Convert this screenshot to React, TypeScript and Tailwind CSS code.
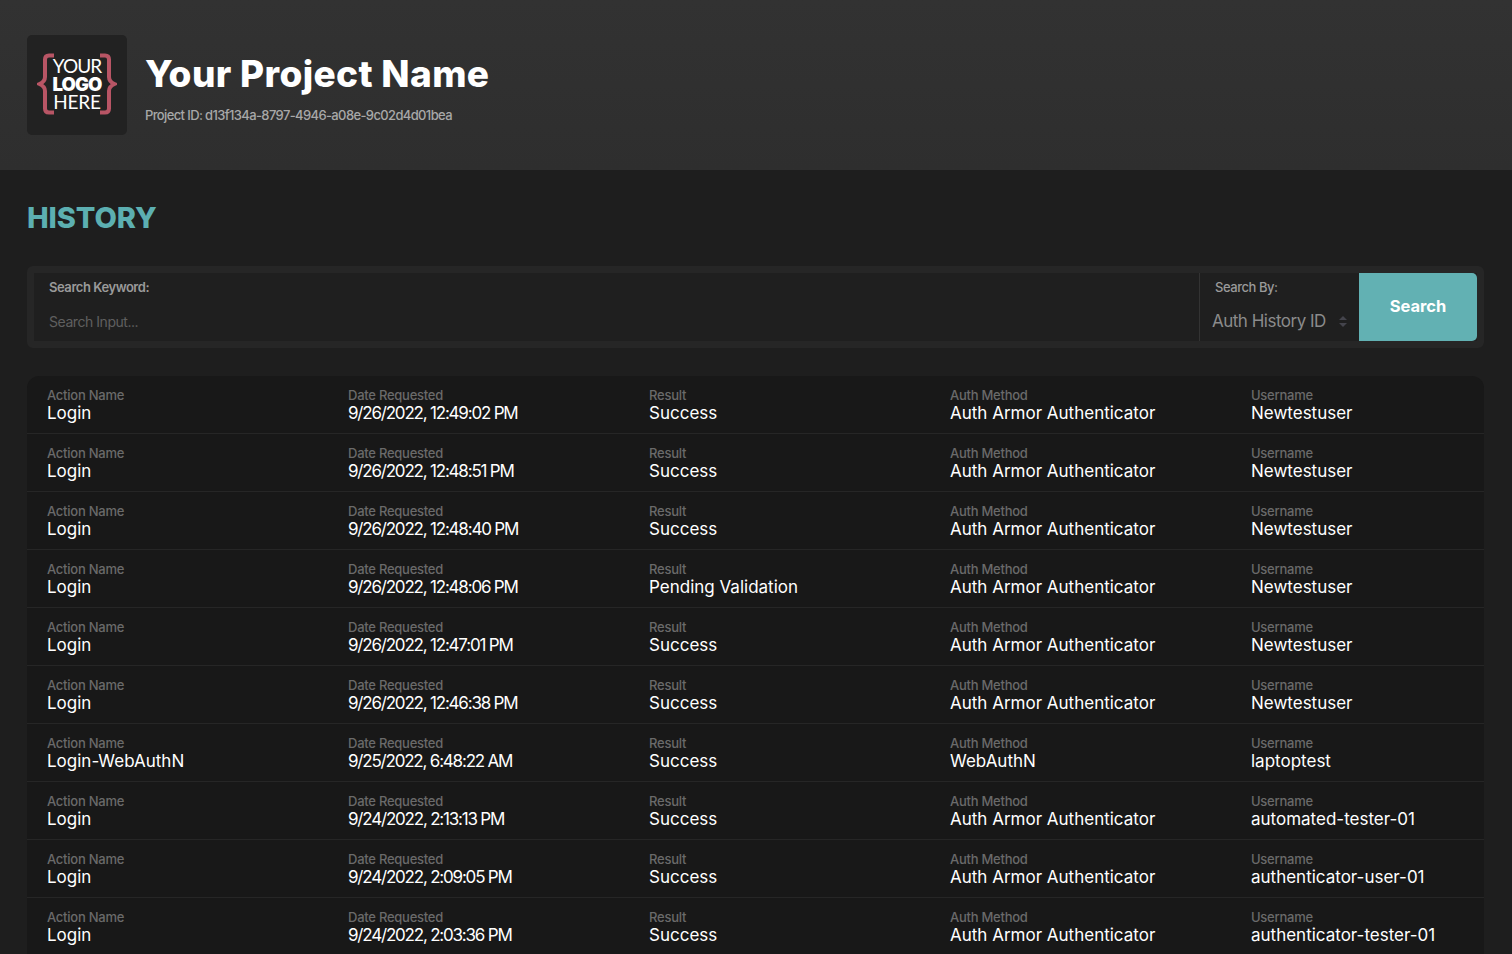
import React from 'react';

interface HistoryRow {
  action: string;
  date: string;
  result: string;
  method: string;
  username: string;
}

const armor = 'Auth Armor Authenticator';

const rows: HistoryRow[] = [
  { action: 'Login', date: '9/26/2022, 12:49:02 PM', result: 'Success', method: armor, username: 'Newtestuser' },
  { action: 'Login', date: '9/26/2022, 12:48:51 PM', result: 'Success', method: armor, username: 'Newtestuser' },
  { action: 'Login', date: '9/26/2022, 12:48:40 PM', result: 'Success', method: armor, username: 'Newtestuser' },
  { action: 'Login', date: '9/26/2022, 12:48:06 PM', result: 'Pending Validation', method: armor, username: 'Newtestuser' },
  { action: 'Login', date: '9/26/2022, 12:47:01 PM', result: 'Success', method: armor, username: 'Newtestuser' },
  { action: 'Login', date: '9/26/2022, 12:46:38 PM', result: 'Success', method: armor, username: 'Newtestuser' },
  { action: 'Login-WebAuthN', date: '9/25/2022, 6:48:22 AM', result: 'Success', method: 'WebAuthN', username: 'laptoptest' },
  { action: 'Login', date: '9/24/2022, 2:13:13 PM', result: 'Success', method: armor, username: 'automated-tester-01' },
  { action: 'Login', date: '9/24/2022, 2:09:05 PM', result: 'Success', method: armor, username: 'authenticator-user-01' },
  { action: 'Login', date: '9/24/2022, 2:03:36 PM', result: 'Success', method: armor, username: 'authenticator-tester-01' },
];

const Cell: React.FC<{ label: string; value: string; tight?: boolean }> = ({ label, value, tight }) => (
  <div>
    <div className="text-[13px] font-medium leading-[15px] tracking-[-0.25px] text-[#6a6a6a]">{label}</div>
    <div className={tight ? 'text-[17px] leading-[21px] tracking-[-1.2px] text-white' : 'text-[17px] leading-[21px] text-white'}>
      {value}
    </div>
  </div>
);

const Logo: React.FC = () => (
  <div className="relative flex h-[100px] w-[100px] shrink-0 flex-col items-center justify-center rounded-[5px] bg-[#222222] pb-[2px] text-white">
    {/* Curly braces */}
    <svg className="absolute left-[10px] top-[18px]" width="80" height="62" viewBox="0 0 80 62" fill="none">
      <path d="M17 2.5H12C9.5 2.5 8 4 8 6.5V24C8 27 6 29.5 2.5 31C6 32.5 8 35 8 38V55.5C8 58 9.5 59.5 12 59.5H17" stroke="#b85565" strokeWidth="4" />
      <path d="M63 2.5H68C70.5 2.5 72 4 72 6.5V24C72 27 74 29.5 77.5 31C74 32.5 72 35 72 38V55.5C72 58 70.5 59.5 68 59.5H63" stroke="#b85565" strokeWidth="4" />
    </svg>
    <div className="font-['Lato',sans-serif] text-[19px] leading-[18px] tracking-[-0.9px]">YOUR</div>
    <div className="font-['Inter',sans-serif] text-[18.5px] font-black leading-[18px] tracking-[-0.9px]">LOGO</div>
    <div className="font-['Lato',sans-serif] text-[19px] leading-[18px] tracking-[-0.2px]">HERE</div>
  </div>
);

export default function App() {
  return (
    <div className="h-screen overflow-hidden bg-[#1e1e1e] font-['Inter',sans-serif]">
      {/* Header */}
      <header className="flex h-[170px] items-center gap-[18px] bg-[linear-gradient(#323232,#2e2e2e)] pl-[27px]">
        <Logo />
        <div className="pt-[4px]">
          <h1 className="text-[37px] font-extrabold leading-[44px] tracking-[0.35px] text-white">Your Project Name</h1>
          <p className="mt-[11px] text-[13px] font-medium leading-[16px] tracking-[-0.63px] text-[#a8a8a8]">
            Project ID: d13f134a-8797-4946-a08e-9c02d4d01bea
          </p>
        </div>
      </header>

      <main className="pl-[27px] pr-[28px]">
        <h2 className="mt-[29px] text-[29px] font-extrabold leading-[38px] tracking-[-0.1px] text-[#5cafb1]">HISTORY</h2>

        {/* Search */}
        <div className="mt-[29px] flex h-[82px] rounded-[6px] border-[7px] border-[#262626] bg-[#1f1f1f]">
          <div className="flex flex-1 flex-col pl-[15px] pt-[6px]">
            <label className="text-[13px] font-semibold leading-[16px] tracking-[-0.45px] text-[#9a9a9a]">Search Keyword:</label>
            <input
              className="mt-[18px] bg-transparent text-[14px] leading-[18px] tracking-[-0.45px] text-white outline-none placeholder:text-[#5f5f5f]"
              placeholder="Search Input..."
            />
          </div>
          <div className="flex w-[160px] flex-col border-l border-[#333333] pl-[15px] pt-[6px]">
            <label className="text-[13px] font-medium leading-[16px] tracking-[-0.45px] text-[#9a9a9a]">Search By:</label>
            <div className="ml-[-3px] mt-[16px] flex items-center">
              <span className="text-[17px] leading-[20px] tracking-[-0.5px] text-[#8b8b8b]">Auth History ID</span>
              <svg className="ml-[13px]" width="8" height="11" viewBox="0 0 8 11" fill="#44444c">
                <path d="M4 0L8 4H0Z" />
                <path d="M4 11L0 7H8Z" />
              </svg>
            </div>
          </div>
          <button className="w-[118px] rounded-r-[5px] bg-[#62b1b3] pb-[2px] text-[16.5px] font-bold text-white">Search</button>
        </div>

        {/* History rows */}
        <div className="mt-[28px] rounded-t-[12px] bg-[#181818]">
          {rows.map((row, i) => (
            <div
              key={i}
              className="grid h-[58px] grid-cols-[301px_301px_301px_301px_1fr] items-center border-b border-[#262626] pl-[20px] pt-[2px]"
            >
              <Cell label="Action Name" value={row.action} />
              <Cell label="Date Requested" value={row.date} tight />
              <Cell label="Result" value={row.result} />
              <Cell label="Auth Method" value={row.method} />
              <Cell label="Username" value={row.username} />
            </div>
          ))}
        </div>
      </main>
    </div>
  );
}
